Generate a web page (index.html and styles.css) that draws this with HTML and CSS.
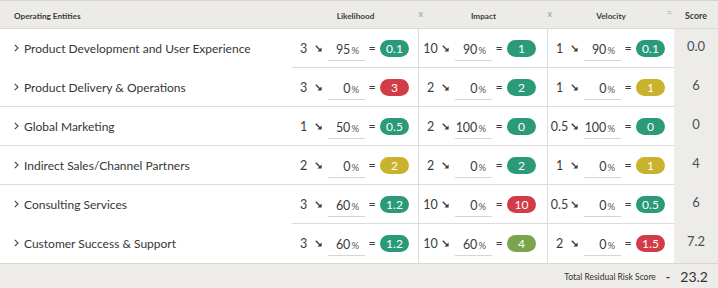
FILE: index.html
```html
<!DOCTYPE html>
<html>
<head>
<meta charset="utf-8">
<link rel="stylesheet" href="styles.css">
</head>
<body>
<div class="grid">
  <div class="head">
    <div class="hcell hname">Operating Entities</div>
    <div class="hcell hcol">Likelihood<span class="op op-x">x</span></div>
    <div class="hcell hcol">Impact<span class="op op-x">x</span></div>
    <div class="hcell hcol">Velocity<span class="op op-eq">=</span></div>
    <div class="hcell hscore">Score</div>
  </div>

  <div class="row">
    <div class="name noline"><svg class="chev" width="5" height="8" viewBox="0 0 5 8"><path d="M0.8 0.8 L4 4 L0.8 7.2" fill="none" stroke="#444" stroke-width="1.1"/></svg>Product Development and User Experience</div>
    <div class="dc div"><span class="num">3</span><svg class="arr" width="7" height="7" viewBox="0 0 7 7"><path d="M0.8 0.8 L4.8 4.8" stroke="#3a3a3a" stroke-width="1.3"/><path d="M6.6 2.4 L6.6 6.6 L2.4 6.6 Z" fill="#3a3a3a"/></svg><span class="inp">95<span class="pc">%</span></span><span class="eq">=</span><span class="pill g">0.1</span></div>
    <div class="dc div"><span class="num">10</span><svg class="arr" width="7" height="7" viewBox="0 0 7 7"><path d="M0.8 0.8 L4.8 4.8" stroke="#3a3a3a" stroke-width="1.3"/><path d="M6.6 2.4 L6.6 6.6 L2.4 6.6 Z" fill="#3a3a3a"/></svg><span class="inp">90<span class="pc">%</span></span><span class="eq">=</span><span class="pill g">1</span></div>
    <div class="dc"><span class="num">1</span><svg class="arr" width="7" height="7" viewBox="0 0 7 7"><path d="M0.8 0.8 L4.8 4.8" stroke="#3a3a3a" stroke-width="1.3"/><path d="M6.6 2.4 L6.6 6.6 L2.4 6.6 Z" fill="#3a3a3a"/></svg><span class="inp">90<span class="pc">%</span></span><span class="eq">=</span><span class="pill g">0.1</span></div>
    <div class="score">0.0</div>
  </div>

  <div class="row">
    <div class="name"><svg class="chev" width="5" height="8" viewBox="0 0 5 8"><path d="M0.8 0.8 L4 4 L0.8 7.2" fill="none" stroke="#444" stroke-width="1.1"/></svg>Product Delivery &amp; Operations</div>
    <div class="dc div"><span class="num">3</span><svg class="arr" width="7" height="7" viewBox="0 0 7 7"><path d="M0.8 0.8 L4.8 4.8" stroke="#3a3a3a" stroke-width="1.3"/><path d="M6.6 2.4 L6.6 6.6 L2.4 6.6 Z" fill="#3a3a3a"/></svg><span class="inp">0<span class="pc">%</span></span><span class="eq">=</span><span class="pill r">3</span></div>
    <div class="dc div"><span class="num">2</span><svg class="arr" width="7" height="7" viewBox="0 0 7 7"><path d="M0.8 0.8 L4.8 4.8" stroke="#3a3a3a" stroke-width="1.3"/><path d="M6.6 2.4 L6.6 6.6 L2.4 6.6 Z" fill="#3a3a3a"/></svg><span class="inp">0<span class="pc">%</span></span><span class="eq">=</span><span class="pill g">2</span></div>
    <div class="dc"><span class="num">1</span><svg class="arr" width="7" height="7" viewBox="0 0 7 7"><path d="M0.8 0.8 L4.8 4.8" stroke="#3a3a3a" stroke-width="1.3"/><path d="M6.6 2.4 L6.6 6.6 L2.4 6.6 Z" fill="#3a3a3a"/></svg><span class="inp">0<span class="pc">%</span></span><span class="eq">=</span><span class="pill y">1</span></div>
    <div class="score">6</div>
  </div>

  <div class="row">
    <div class="name"><svg class="chev" width="5" height="8" viewBox="0 0 5 8"><path d="M0.8 0.8 L4 4 L0.8 7.2" fill="none" stroke="#444" stroke-width="1.1"/></svg>Global Marketing</div>
    <div class="dc div"><span class="num">1</span><svg class="arr" width="7" height="7" viewBox="0 0 7 7"><path d="M0.8 0.8 L4.8 4.8" stroke="#3a3a3a" stroke-width="1.3"/><path d="M6.6 2.4 L6.6 6.6 L2.4 6.6 Z" fill="#3a3a3a"/></svg><span class="inp">50<span class="pc">%</span></span><span class="eq">=</span><span class="pill g">0.5</span></div>
    <div class="dc div"><span class="num">2</span><svg class="arr" width="7" height="7" viewBox="0 0 7 7"><path d="M0.8 0.8 L4.8 4.8" stroke="#3a3a3a" stroke-width="1.3"/><path d="M6.6 2.4 L6.6 6.6 L2.4 6.6 Z" fill="#3a3a3a"/></svg><span class="inp">100<span class="pc">%</span></span><span class="eq">=</span><span class="pill g">0</span></div>
    <div class="dc"><span class="num">0.5</span><svg class="arr" width="7" height="7" viewBox="0 0 7 7"><path d="M0.8 0.8 L4.8 4.8" stroke="#3a3a3a" stroke-width="1.3"/><path d="M6.6 2.4 L6.6 6.6 L2.4 6.6 Z" fill="#3a3a3a"/></svg><span class="inp">100<span class="pc">%</span></span><span class="eq">=</span><span class="pill g">0</span></div>
    <div class="score">0</div>
  </div>

  <div class="row">
    <div class="name"><svg class="chev" width="5" height="8" viewBox="0 0 5 8"><path d="M0.8 0.8 L4 4 L0.8 7.2" fill="none" stroke="#444" stroke-width="1.1"/></svg>Indirect Sales/Channel Partners</div>
    <div class="dc div"><span class="num">2</span><svg class="arr" width="7" height="7" viewBox="0 0 7 7"><path d="M0.8 0.8 L4.8 4.8" stroke="#3a3a3a" stroke-width="1.3"/><path d="M6.6 2.4 L6.6 6.6 L2.4 6.6 Z" fill="#3a3a3a"/></svg><span class="inp">0<span class="pc">%</span></span><span class="eq">=</span><span class="pill y">2</span></div>
    <div class="dc div"><span class="num">2</span><svg class="arr" width="7" height="7" viewBox="0 0 7 7"><path d="M0.8 0.8 L4.8 4.8" stroke="#3a3a3a" stroke-width="1.3"/><path d="M6.6 2.4 L6.6 6.6 L2.4 6.6 Z" fill="#3a3a3a"/></svg><span class="inp">0<span class="pc">%</span></span><span class="eq">=</span><span class="pill g">2</span></div>
    <div class="dc"><span class="num">1</span><svg class="arr" width="7" height="7" viewBox="0 0 7 7"><path d="M0.8 0.8 L4.8 4.8" stroke="#3a3a3a" stroke-width="1.3"/><path d="M6.6 2.4 L6.6 6.6 L2.4 6.6 Z" fill="#3a3a3a"/></svg><span class="inp">0<span class="pc">%</span></span><span class="eq">=</span><span class="pill y">1</span></div>
    <div class="score">4</div>
  </div>

  <div class="row">
    <div class="name noline"><svg class="chev" width="5" height="8" viewBox="0 0 5 8"><path d="M0.8 0.8 L4 4 L0.8 7.2" fill="none" stroke="#444" stroke-width="1.1"/></svg>Consulting Services</div>
    <div class="dc div"><span class="num">3</span><svg class="arr" width="7" height="7" viewBox="0 0 7 7"><path d="M0.8 0.8 L4.8 4.8" stroke="#3a3a3a" stroke-width="1.3"/><path d="M6.6 2.4 L6.6 6.6 L2.4 6.6 Z" fill="#3a3a3a"/></svg><span class="inp">60<span class="pc">%</span></span><span class="eq">=</span><span class="pill g">1.2</span></div>
    <div class="dc div"><span class="num">10</span><svg class="arr" width="7" height="7" viewBox="0 0 7 7"><path d="M0.8 0.8 L4.8 4.8" stroke="#3a3a3a" stroke-width="1.3"/><path d="M6.6 2.4 L6.6 6.6 L2.4 6.6 Z" fill="#3a3a3a"/></svg><span class="inp">0<span class="pc">%</span></span><span class="eq">=</span><span class="pill r">10</span></div>
    <div class="dc"><span class="num">0.5</span><svg class="arr" width="7" height="7" viewBox="0 0 7 7"><path d="M0.8 0.8 L4.8 4.8" stroke="#3a3a3a" stroke-width="1.3"/><path d="M6.6 2.4 L6.6 6.6 L2.4 6.6 Z" fill="#3a3a3a"/></svg><span class="inp">0<span class="pc">%</span></span><span class="eq">=</span><span class="pill g">0.5</span></div>
    <div class="score">6</div>
  </div>

  <div class="row">
    <div class="name noline"><svg class="chev" width="5" height="8" viewBox="0 0 5 8"><path d="M0.8 0.8 L4 4 L0.8 7.2" fill="none" stroke="#444" stroke-width="1.1"/></svg>Customer Success &amp; Support</div>
    <div class="dc div noline"><span class="num">3</span><svg class="arr" width="7" height="7" viewBox="0 0 7 7"><path d="M0.8 0.8 L4.8 4.8" stroke="#3a3a3a" stroke-width="1.3"/><path d="M6.6 2.4 L6.6 6.6 L2.4 6.6 Z" fill="#3a3a3a"/></svg><span class="inp">60<span class="pc">%</span></span><span class="eq">=</span><span class="pill g">1.2</span></div>
    <div class="dc div noline"><span class="num">10</span><svg class="arr" width="7" height="7" viewBox="0 0 7 7"><path d="M0.8 0.8 L4.8 4.8" stroke="#3a3a3a" stroke-width="1.3"/><path d="M6.6 2.4 L6.6 6.6 L2.4 6.6 Z" fill="#3a3a3a"/></svg><span class="inp">60<span class="pc">%</span></span><span class="eq">=</span><span class="pill o">4</span></div>
    <div class="dc noline"><span class="num">2</span><svg class="arr" width="7" height="7" viewBox="0 0 7 7"><path d="M0.8 0.8 L4.8 4.8" stroke="#3a3a3a" stroke-width="1.3"/><path d="M6.6 2.4 L6.6 6.6 L2.4 6.6 Z" fill="#3a3a3a"/></svg><span class="inp">0<span class="pc">%</span></span><span class="eq">=</span><span class="pill r">1.5</span></div>
    <div class="score">7.2</div>
  </div>

  <div class="foot">
    <span class="ftlabel">Total Residual Risk Score</span>
    <span class="fdash">-</span>
    <span class="ftotal">23.2</span>
  </div>
</div>
</body>
</html>
```

FILE: styles.css
```css
* { box-sizing: border-box; }
html, body { margin: 0; padding: 0; background: #fff; }
body {
  width: 718px;
  height: 288px;
  overflow: hidden;
  font-family: Lato, "Noto Sans", sans-serif;
  color: #3b3b3b;
}
.grid { display: flex; flex-direction: column; width: 718px; }

.head {
  display: grid;
  grid-template-columns: 292px 127px 129px 126px 44px;
  height: 29px;
  background: #ecebe8;
  border-top: 1px solid #d4d4d4;
  border-bottom: 1px solid #d9d9d9;
}
.hcell {
  position: relative;
  display: flex;
  align-items: center;
  font-size: 8.2px;
  font-weight: 700;
  color: #3a3a3a;
  padding-top: 2px;
}
.hname { padding-left: 14px; }
.hcol { justify-content: center; }
.hscore { justify-content: center; font-size: 8.8px; }
.op {
  position: absolute;
  top: 7px;
  font-size: 9px;
  font-weight: 400;
  color: #9a9a9a;
}
.op-x { right: -4px; }
.op-eq { right: 2px; top: 6px; }

.row {
  display: grid;
  grid-template-columns: 292px 127px 129px 126px 44px;
  height: 39px;
}
.name {
  display: flex;
  align-items: center;
  gap: 5px;
  padding-left: 14px;
  font-size: 12px;
  color: #363636;
  border-bottom: 1px solid #dcdcdc;
}
.chev { flex: none; }
.dc {
  display: flex;
  align-items: center;
  border-bottom: 1px solid #dcdcdc;
  font-size: 12.5px;
  color: #3b3b3b;
}
.div { border-right: 1px solid #dcdcdc; }
.noline { border-bottom-color: transparent; }
.num { width: 23px; text-align: center; flex: none; }
.arr { flex: none; margin-top: 1px; }
.inp {
  flex: none;
  width: 37px;
  margin-left: 6px;
  margin-top: 4px;
  height: 22px;
  line-height: 22px;
  text-align: right;
  padding-right: 6px;
  border-bottom: 1px solid #d6d6d6;
}
.pc { font-size: 9.5px; color: #555; margin-left: 1px; }
.eq { flex: none; margin-left: 3px; width: 8px; text-align: center; }
.pill {
  flex: none;
  margin-left: 4px;
  width: 29px;
  height: 17px;
  border-radius: 9px;
  color: #fff;
  font-size: 12px;
  display: flex;
  align-items: center;
  justify-content: center;
}
.g { background: #2a9a78; }
.r { background: #d13c47; }
.y { background: #c9b22c; }
.o { background: #79a54c; }

.score {
  background: #edece9;
  display: flex;
  justify-content: center;
  padding-top: 9px;
  font-size: 13px;
  color: #45505c;
}

.foot {
  height: 26px;
  background: #edece9;
  border-top: 1px solid #d6d6d6;
  display: flex;
  align-items: center;
  justify-content: flex-end;
  padding-right: 10px;
}
.ftlabel { font-size: 8.5px; color: #333; }
.fdash { font-size: 12px; font-weight: 700; color: #333; margin-left: 10px; }
.ftotal { font-size: 14px; color: #333; margin-left: 10px; }
```
